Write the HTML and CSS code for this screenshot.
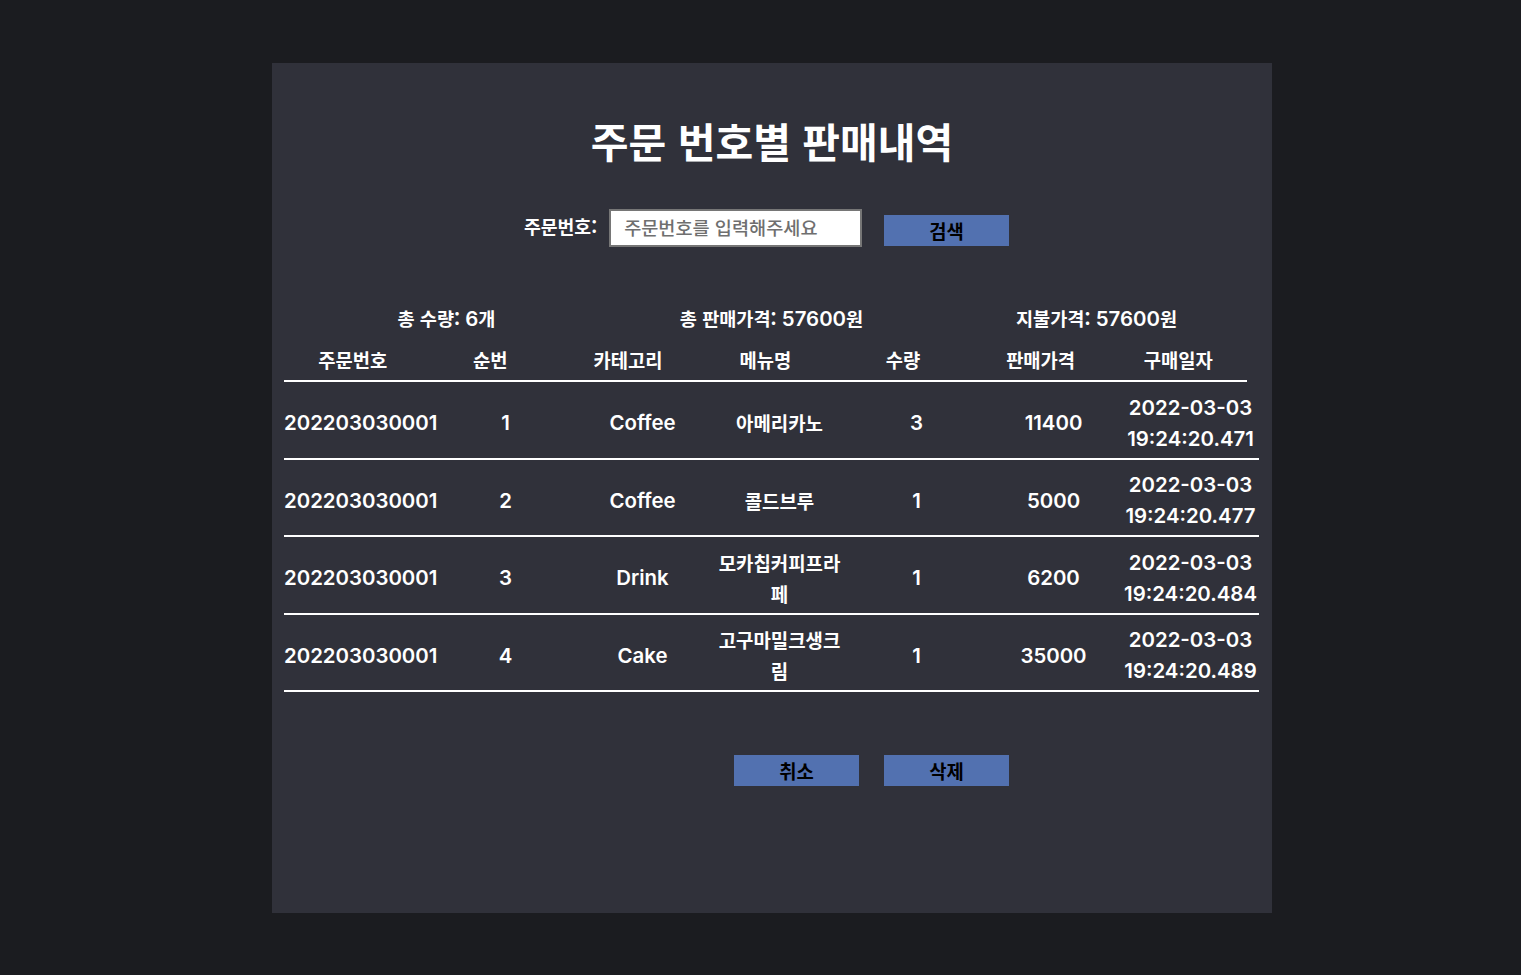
FILE: index.html
```html
<!DOCTYPE html>
<html lang="ko">
<head>
<meta charset="utf-8">
<title>주문 번호별 판매내역</title>
<link rel="stylesheet" href="styles.css">
</head>
<body>
<main class="panel">
  <h1 class="title">주문 번호별 판매내역</h1>
  <form class="search">
    <label class="search-label" for="orderNo">주문번호:</label>
    <input class="search-input" id="orderNo" type="text" placeholder="주문번호를 입력해주세요">
    <button class="btn btn-search" type="button">검색</button>
  </form>

  <div class="summary">
    <div>총 수량: <span class="num">6</span>개</div>
    <div>총 판매가격: <span class="num">57600</span>원</div>
    <div>지불가격: <span class="num">57600</span>원</div>
  </div>

  <div class="thead">
    <div>주문번호</div>
    <div>순번</div>
    <div>카테고리</div>
    <div>메뉴명</div>
    <div>수량</div>
    <div>판매가격</div>
    <div>구매일자</div>
  </div>

  <div class="row">
    <div class="lat first">202203030001</div>
    <div class="lat">1</div>
    <div class="lat">Coffee</div>
    <div class="ko">아메리카노</div>
    <div class="lat">3</div>
    <div class="lat">11400</div>
    <div class="lat">2022-03-03 19:24:20.471</div>
  </div>
  <div class="row">
    <div class="lat first">202203030001</div>
    <div class="lat">2</div>
    <div class="lat">Coffee</div>
    <div class="ko">콜드브루</div>
    <div class="lat">1</div>
    <div class="lat">5000</div>
    <div class="lat">2022-03-03 19:24:20.477</div>
  </div>
  <div class="row">
    <div class="lat first">202203030001</div>
    <div class="lat">3</div>
    <div class="lat">Drink</div>
    <div class="ko">모카칩커피프라페</div>
    <div class="lat">1</div>
    <div class="lat">6200</div>
    <div class="lat">2022-03-03 19:24:20.484</div>
  </div>
  <div class="row">
    <div class="lat first">202203030001</div>
    <div class="lat">4</div>
    <div class="lat">Cake</div>
    <div class="ko">고구마밀크생크림</div>
    <div class="lat">1</div>
    <div class="lat">35000</div>
    <div class="lat">2022-03-03 19:24:20.489</div>
  </div>

  <div class="actions">
    <button class="btn" type="button">취소</button>
    <button class="btn" type="button">삭제</button>
  </div>
</main>
</body>
</html>
```

FILE: styles.css
```css
html, body {
  margin: 0;
  padding: 0;
  background: #1b1c20;
}

body {
  min-height: 975px;
  overflow: hidden;
}

.panel {
  width: 1000px;
  height: 850px;
  margin: 63px 0 0 272px;
  padding: 0 12px;
  box-sizing: border-box;
  background: #30313a;
  color: #ffffff;
  font-family: "Noto Sans CJK KR", "Noto Sans", sans-serif;
}

.title {
  margin: 0;
  padding-top: 49px;
  line-height: 56px;
  font-size: 41px;
  font-weight: 700;
  text-align: center;
}

.search {
  display: flex;
  align-items: flex-start;
  margin: 41px 0 0 0;
  padding-left: 240px;
}

.search-label {
  font-size: 18.25px;
  font-weight: 700;
  line-height: 34px;
  margin-right: 12px;
}

.search-input {
  width: 253px;
  height: 38px;
  box-sizing: border-box;
  border: 2px solid #767676;
  padding: 0 0 4px 13px;
  background: #ffffff;
  font-family: "Noto Sans CJK KR", sans-serif;
  font-size: 18.6px;
  font-weight: 500;
  color: #333;
  outline: none;
}

.search-input::placeholder {
  color: #6f6f6f;
}

.btn {
  width: 125px;
  height: 31px;
  border: none;
  padding: 0;
  background: #5271b0;
  color: #000000;
  font-family: "Noto Sans CJK KR", sans-serif;
  font-size: 18.8px;
  font-weight: 700;
  line-height: 31px;
}

.btn-search {
  margin: 6px 0 0 22px;
}

.summary {
  display: grid;
  grid-template-columns: repeat(3, 1fr);
  width: 975px;
  margin-top: 54.5px;
  line-height: 31px;
  font-size: 18.6px;
  font-weight: 700;
  text-align: center;
}

.num {
  font-family: "Inter", "Liberation Sans", sans-serif;
  font-size: 20.4px;
  font-weight: 600;
}

.thead {
  display: grid;
  grid-template-columns: repeat(7, 1fr);
  width: 963px;
  padding: 10px 0 5.5px;
  border-bottom: 2px solid #ffffff;
  line-height: 31px;
  font-size: 18.75px;
  font-weight: 700;
  text-align: center;
}

.row {
  display: grid;
  grid-template-columns: 153px repeat(6, 137px);
  align-items: center;
  width: 975px;
  height: 69.5px;
  padding-top: 4px;
  margin-top: 2px;
  border-bottom: 2px solid #ffffff;
  line-height: 31px;
  text-align: center;
}

.lat {
  font-family: "Inter", "Liberation Sans", sans-serif;
  font-size: 20.4px;
  font-weight: 600;
}

.lat.first {
  text-align: left;
  white-space: nowrap;
}

.ko {
  font-size: 18.9px;
  font-weight: 700;
}

.actions {
  display: flex;
  gap: 25px;
  margin-top: 63px;
  padding-left: 450px;
}
```
